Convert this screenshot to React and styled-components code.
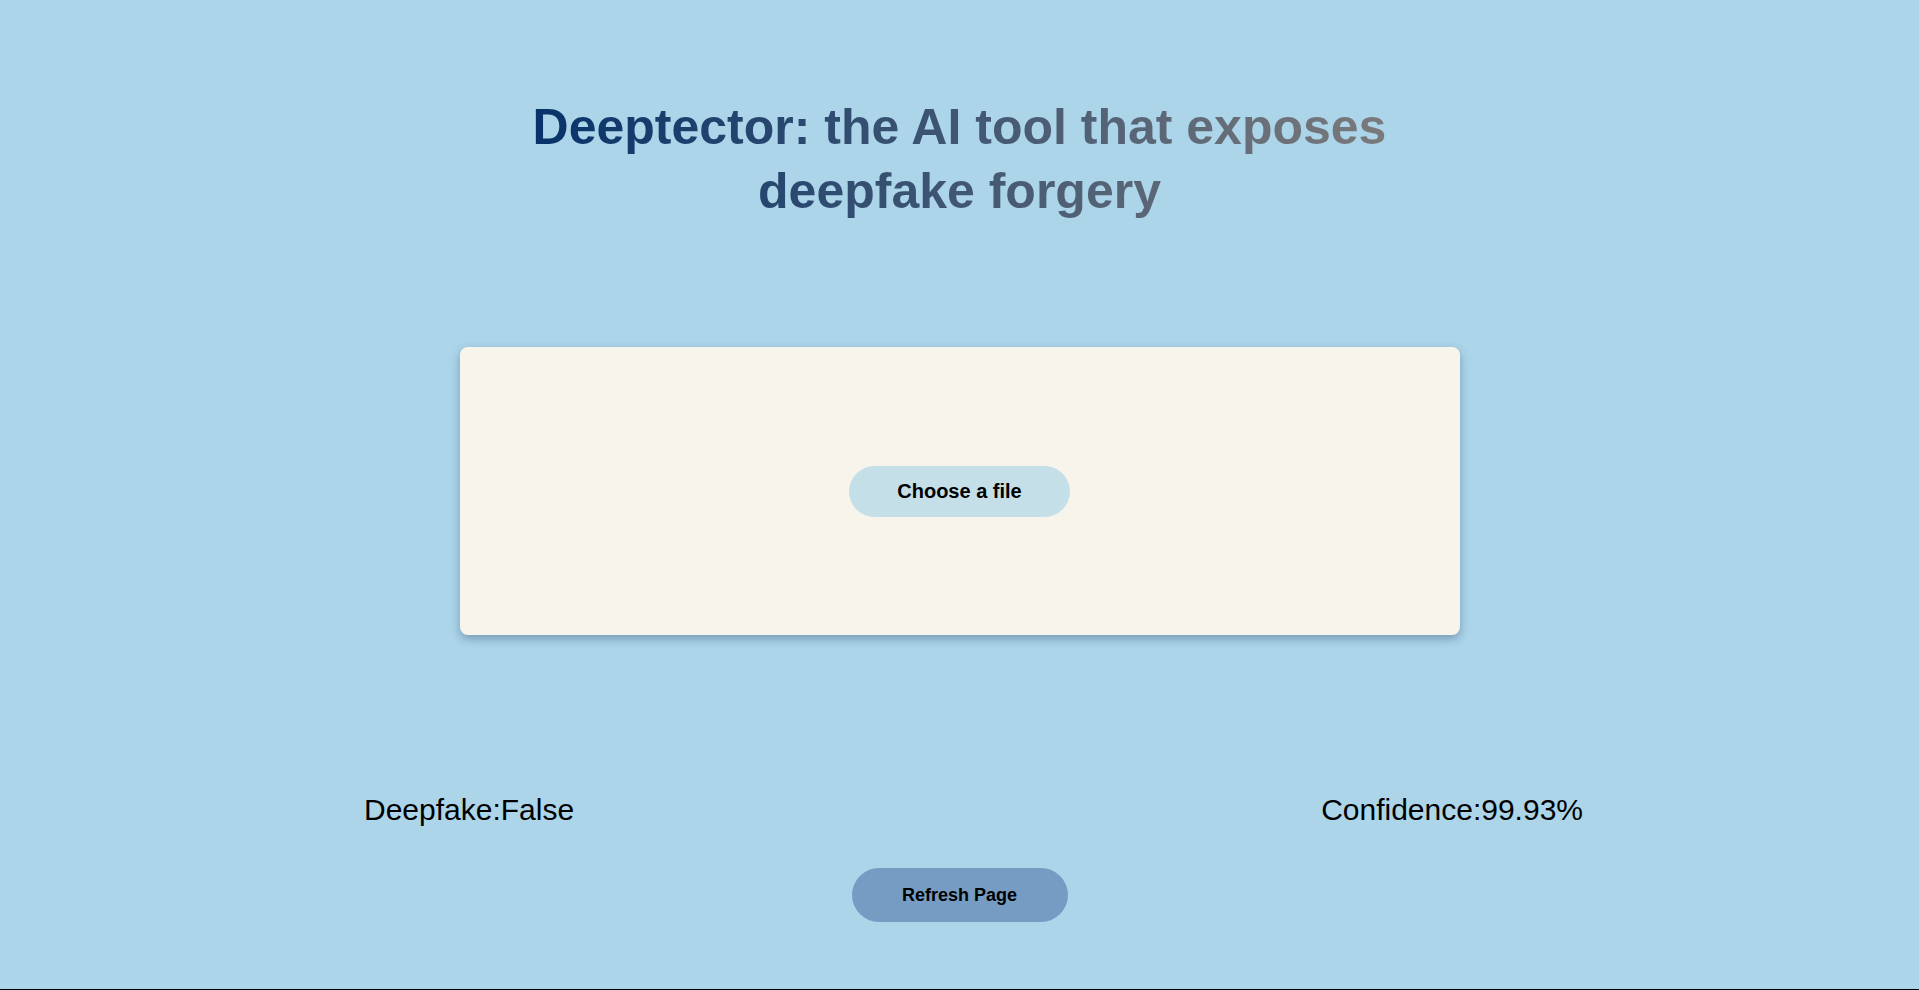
import React from "react";
import styled, { createGlobalStyle } from "styled-components";

const GlobalStyle = createGlobalStyle`
  html, body {
    margin: 0;
    padding: 0;
    background: #acd5ea;
    font-family: "Liberation Sans", Arial, sans-serif;
  }
`;

const Page = styled.div`
  min-height: 989px;
  border-bottom: 1px solid #000;
  display: flex;
  flex-direction: column;
  align-items: center;
`;

const Title = styled.h1`
  width: fit-content;
  margin: 95px 0 0;
  font-size: 50px;
  line-height: 64px;
  font-weight: bold;
  text-align: center;
  background: linear-gradient(90deg, #07336a 0%, #7a7a7b 100%);
  -webkit-background-clip: text;
  background-clip: text;
  color: transparent;
`;

const UploadCard = styled.div`
  width: 1000px;
  height: 288px;
  margin-top: 124px;
  background: #f7f4ec;
  border-radius: 8px;
  box-shadow: 0 4px 10px rgba(40, 70, 100, 0.4);
  display: flex;
  align-items: center;
  justify-content: center;
`;

const PillButton = styled.button`
  border: none;
  border-radius: 28px;
  font-family: "Liberation Sans", Arial, sans-serif;
  font-weight: bold;
  color: #000;
  cursor: pointer;
  background: ${(p) => p.bg};
  width: ${(p) => p.w}px;
  height: ${(p) => p.h}px;
  font-size: ${(p) => p.fs}px;
  padding: 0;
`;

const Results = styled.div`
  width: 1219px;
  margin: 158px 0 0 28px;
  display: flex;
  justify-content: space-between;
  font-size: 30px;
  line-height: 34px;
  color: #000;
`;

const Footer = styled.div`
  margin-top: 41px;
`;

export default function App() {
  return (
    <React.Fragment>
      <GlobalStyle />
      <Page>
        <Title>
          Deeptector: the AI tool that exposes
          <br />
          deepfake forgery
        </Title>
        <UploadCard>
          <PillButton bg="#c5dfe8" w={221} h={51} fs={20}>
            Choose a file
          </PillButton>
        </UploadCard>
        <Results>
          <span>Deepfake:False</span>
          <span>Confidence:99.93%</span>
        </Results>
        <Footer>
          <PillButton bg="#769cc4" w={216} h={54} fs={18}>
            Refresh Page
          </PillButton>
        </Footer>
      </Page>
    </React.Fragment>
  );
}
